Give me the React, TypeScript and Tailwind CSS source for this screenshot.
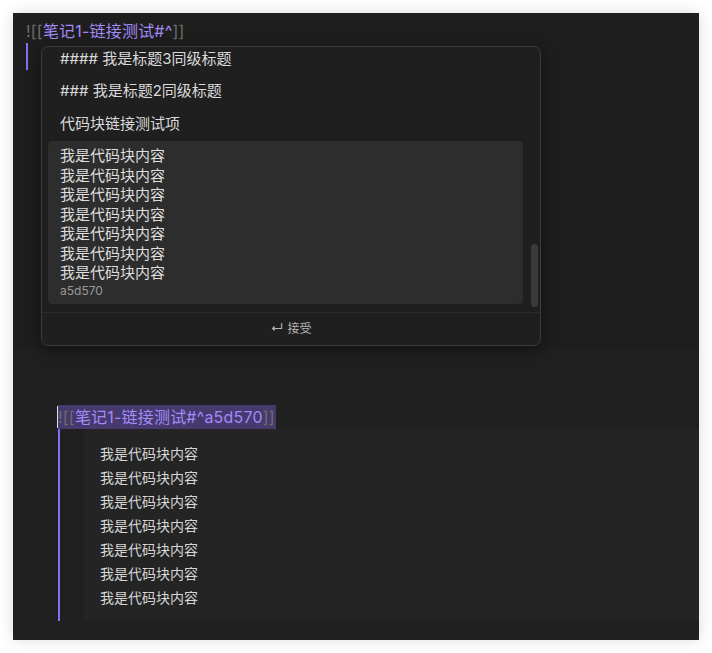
import React from 'react';

const codeLines = Array.from({ length: 7 }, () => '我是代码块内容');

const Link: React.FC<{ target: string }> = ({ target }) => (
  <>
    <span className="text-[#6e6e6e]">![[</span>
    <span className="text-[#a38bf8]">{target}</span>
    <span className="text-[#6e6e6e]">]]</span>
  </>
);

const Suggest: React.FC = () => (
  <div className="absolute left-[28px] top-[33px] w-[500px] h-[300px] rounded-[7px] border border-[#3c3c3c] bg-[#1f1f1f] shadow-[0_4px_18px_rgba(0,0,0,0.45)] flex flex-col overflow-hidden">
    <div className="relative h-[265px] overflow-hidden pl-[6px] pr-[17px]">
      <div className="h-[28px] pb-[4px] flex items-center px-[12px] text-[15px] text-[#dadada]">#### 我是标题3同级标题</div>
      <div className="h-[33px] pb-[1px] flex items-center px-[12px] text-[15px] text-[#dadada]">### 我是标题2同级标题</div>
      <div className="h-[33px] flex items-center px-[12px] text-[15px] text-[#dadada]">代码块链接测试项</div>
      <div className="rounded-[4px] bg-[#2d2d2d] px-[12px] pt-[5px] pb-[5px]">
        {codeLines.map((l, i) => (
          <div key={i} className="text-[15px] leading-[19.5px] text-[#dedede]">{l}</div>
        ))}
        <div className="text-[12px] leading-[16px] text-[#9a9a9a]">a5d570</div>
      </div>
      <div className="absolute right-[2px] top-[197px] w-[7px] h-[63px] rounded-full bg-[#3a3a3a]"></div>
    </div>
    <div className="border-t border-[#2c2c2c] flex-1 flex items-center justify-center text-[12px] text-[#b5b5b5] gap-[4px]">
      <span className="text-[13px]">↵</span>
      <span>接受</span>
    </div>
  </div>
);

export default function App() {
  return (
    <div className="min-h-screen bg-white p-[13px]" style={{ fontFamily: 'Inter, "Noto Sans CJK SC", sans-serif' }}>
      <div className="w-[686px] bg-[#1f1f1f] shadow-[0_0_14px_rgba(0,0,0,0.14)] overflow-hidden">
        {/* source view with the suggestion popup */}
        <div className="relative h-[337px] bg-[#1e1e1e] pl-[13px] pt-[6px]">
          <div className="text-[16px] leading-[24px] tracking-[0.2px]">
            <Link target="笔记1-链接测试#^" />
          </div>
          <div className="w-[2px] h-[27px] bg-[#8b6cef]"></div>
          <Suggest />
        </div>

        {/* rendered embed */}
        <div className="h-[290px] bg-[#202020] pl-[44px] pt-[55px]">
          <div className="flex">
            <span className="w-[1px] h-[22px] mt-[1px] bg-[#e0e0e0]"></span>
            <div className="bg-[#46396d] text-[16px] leading-[24px] tracking-[0.2px] pr-[1px]">
              <Link target="笔记1-链接测试#^a5d570" />
            </div>
          </div>
          <div className="flex">
            <div className="ml-[1px] w-[2px] bg-[#8b6cef]"></div>
            <div className="ml-[24px] flex-1 rounded-l-[4px] bg-[#242424] pl-[16px] pt-[13px] pb-[11px]">
              {codeLines.map((l, i) => (
                <div key={i} className="text-[14px] leading-[24px] text-[#d6d6d6]">{l}</div>
              ))}
            </div>
          </div>
        </div>
      </div>
    </div>
  );
}
